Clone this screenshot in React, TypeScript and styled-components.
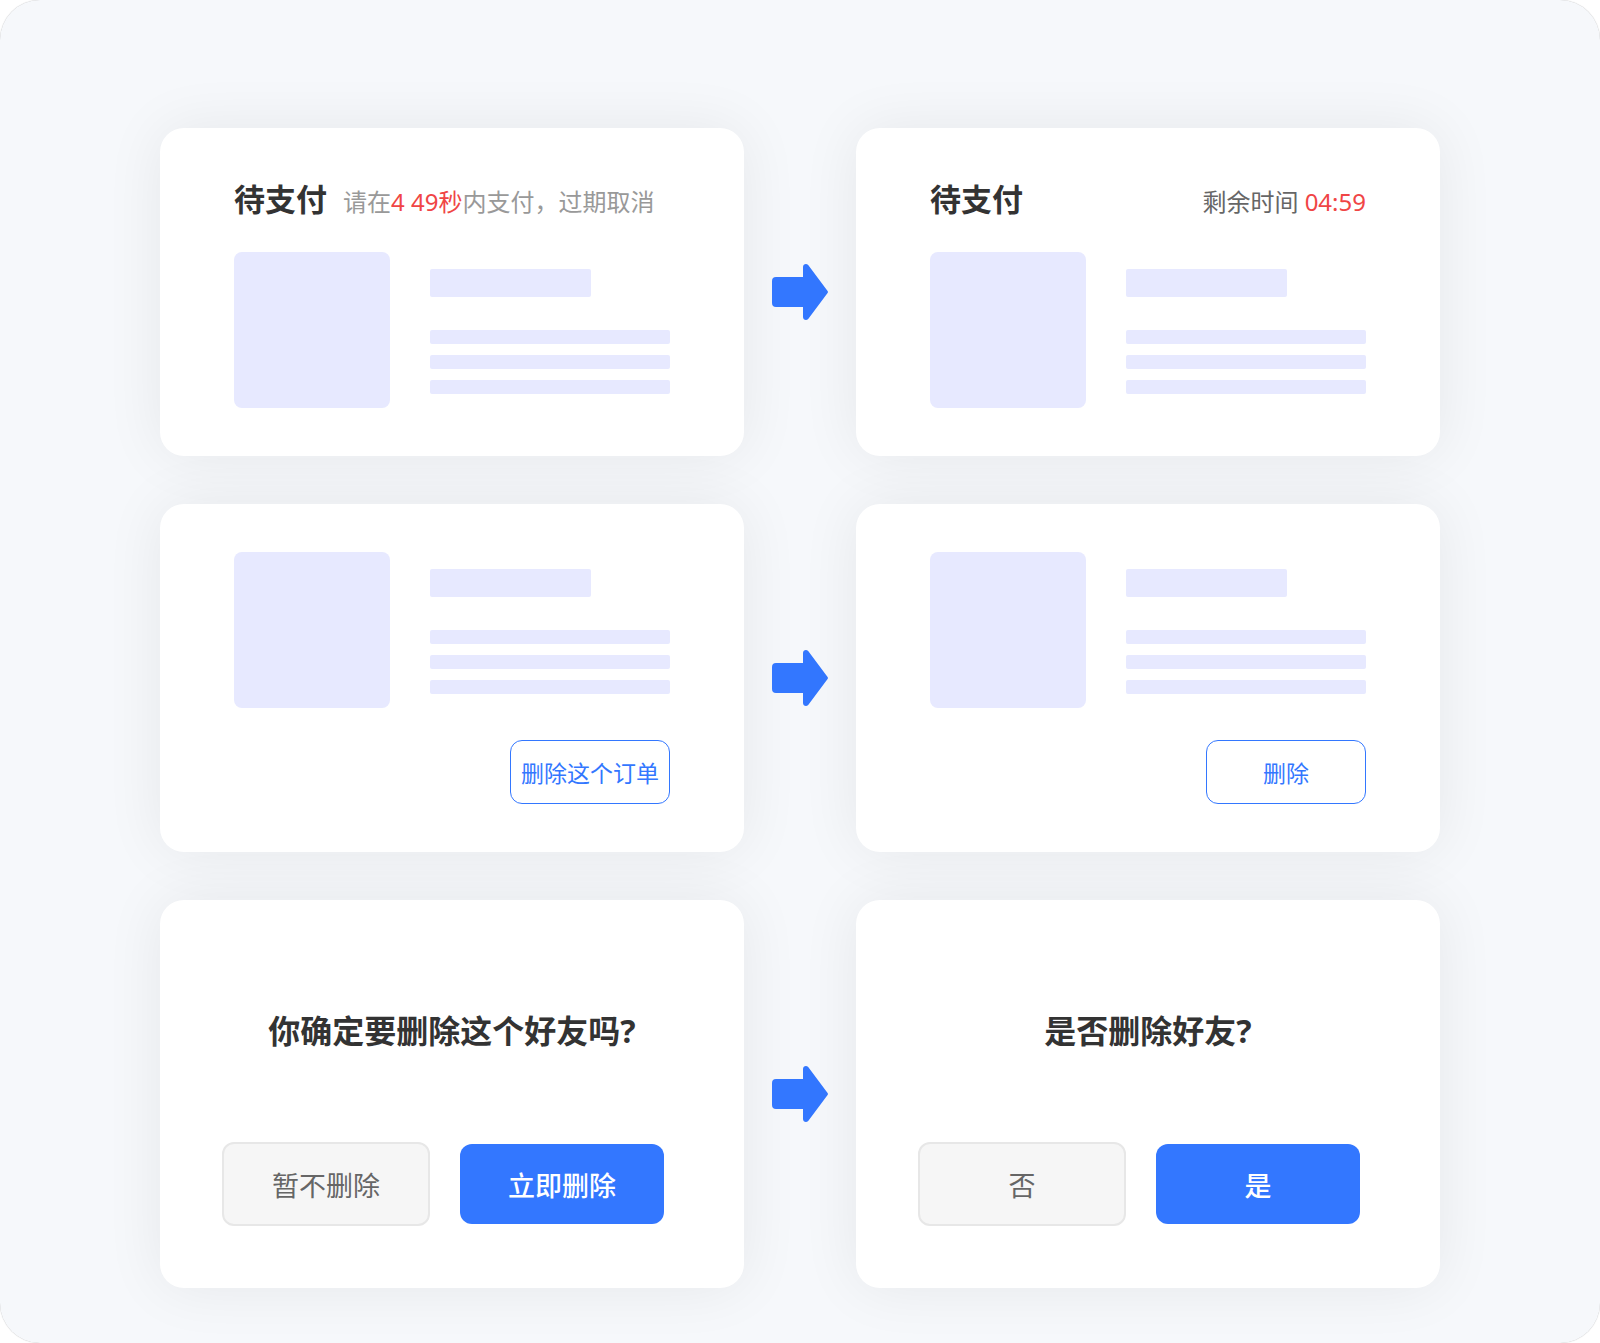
import React from "react";
import styled, { createGlobalStyle } from "styled-components";

const GlobalStyle = createGlobalStyle`
  *, *::before, *::after { box-sizing: border-box; }
  body {
    margin: 0;
    background: #fff;
    font-family: "Noto Sans", "Noto Sans CJK SC", sans-serif;
    color: #333;
  }
`;

const Page = styled.main`
  min-height: 100vh;
  padding: 128px 10% 54px;
  border-radius: 40px;
  background: #f6f8fb;
  box-shadow: 0 0 1px rgba(0, 0, 0, 0.3);
  display: flex;
  flex-direction: column;
  gap: 48px;
`;

const Comparison = styled.section`
  display: grid;
  grid-template-columns: minmax(0, 1fr) 112px minmax(0, 1fr);
  align-items: stretch;
`;

const Card = styled.article`
  border-radius: 24px;
  background: #fff;
  box-shadow: 0 0 60px rgba(30, 30, 10, 0.07);
  display: flex;
  flex-direction: column;
`;

const OrderCard = styled(Card)`
  padding: 48px 74px;
`;

const DialogCard = styled(Card)`
  padding: 108px 62px 62px;
  gap: 88px;
`;

const CardHeader = styled.header<{ $spread?: boolean }>`
  display: flex;
  align-items: baseline;
  justify-content: ${(p) => (p.$spread ? "space-between" : "flex-start")};
  gap: 16px;
  height: 46px;
  margin-bottom: 30px;
  white-space: nowrap;
`;

const Title = styled.h2`
  margin: 0;
  font-size: 31px;
  line-height: 46px;
  font-weight: 700;
`;

const Question = styled(Title)`
  font-size: 32px;
  text-align: center;
`;

const Hint = styled.p<{ $dark?: boolean }>`
  margin: 0;
  font-size: 24px;
  line-height: 46px;
  color: ${(p) => (p.$dark ? "#666" : "#999")};
`;

const Urgent = styled.span`
  color: #f04545;
`;

const Product = styled.div`
  display: flex;
  gap: 40px;
`;

const Thumbnail = styled.div`
  flex: none;
  width: 156px;
  height: 156px;
  border-radius: 8px;
  background: #e7e9ff;
`;

const Details = styled.div`
  flex: 1;
  padding-top: 17px;
  display: flex;
  flex-direction: column;
  gap: 11px;
`;

const NameBar = styled.div`
  width: 67%;
  height: 28px;
  margin-bottom: 22px;
  border-radius: 2px;
  background: #e7e9ff;
`;

const Line = styled.div`
  height: 14px;
  border-radius: 2px;
  background: #e7e9ff;
`;

const Button = styled.button`
  display: flex;
  align-items: center;
  justify-content: center;
  padding: 0;
  border-radius: 12px;
  font-family: inherit;
  white-space: nowrap;
  cursor: pointer;
`;

const OutlineButton = styled(Button)`
  align-self: flex-end;
  width: 160px;
  height: 64px;
  margin-top: 32px;
  border: 1px solid #3377ff;
  background: #fff;
  color: #3377ff;
  font-size: 23px;
`;

const Actions = styled.div`
  display: flex;
  align-items: center;
  gap: 30px;
`;

const CancelButton = styled(Button)`
  width: 208px;
  height: 84px;
  border: 2px solid #e7e7e7;
  background: #f6f6f6;
  color: #666;
  font-size: 27px;
`;

const PrimaryButton = styled(Button)`
  width: 204px;
  height: 80px;
  border: 0;
  background: #3377ff;
  color: #fff;
  font-size: 27px;
  font-weight: 500;
`;

const ArrowIcon = styled.svg`
  place-self: center;
  width: 56px;
  height: 56px;
  fill: #3377ff;
`;

function Arrow() {
  return (
    <ArrowIcon viewBox="0 0 56 56" aria-hidden="true">
      <path d="M4 13H31V3C31 0.2 34.3 -1 36.2 1.1L55.2 26.4C56.2 27.6 56.2 28.4 55.2 29.6L36.2 54.9C34.3 57 31 55.8 31 53V43H4Q0 43 0 39V17Q0 13 4 13Z" />
    </ArrowIcon>
  );
}

function ProductPlaceholder() {
  return (
    <Product>
      <Thumbnail />
      <Details>
        <NameBar />
        <Line />
        <Line />
        <Line />
      </Details>
    </Product>
  );
}

function OrderWithAction({ action }: { action: string }) {
  return (
    <OrderCard>
      <ProductPlaceholder />
      <OutlineButton type="button">{action}</OutlineButton>
    </OrderCard>
  );
}

interface ConfirmProps {
  question: string;
  cancel: string;
  confirm: string;
}

function Confirm({ question, cancel, confirm }: ConfirmProps) {
  return (
    <DialogCard>
      <Question>{question}</Question>
      <Actions>
        <CancelButton type="button">{cancel}</CancelButton>
        <PrimaryButton type="button">{confirm}</PrimaryButton>
      </Actions>
    </DialogCard>
  );
}

export default function App() {
  return (
    <>
      <GlobalStyle />
      <Page lang="zh-CN">
        <Comparison>
          <OrderCard>
            <CardHeader>
              <Title>待支付</Title>
              <Hint>
                请在<Urgent>4 49秒</Urgent>内支付，过期取消
              </Hint>
            </CardHeader>
            <ProductPlaceholder />
          </OrderCard>
          <Arrow />
          <OrderCard>
            <CardHeader $spread>
              <Title>待支付</Title>
              <Hint $dark>
                剩余时间 <Urgent>04:59</Urgent>
              </Hint>
            </CardHeader>
            <ProductPlaceholder />
          </OrderCard>
        </Comparison>
        <Comparison>
          <OrderWithAction action="删除这个订单" />
          <Arrow />
          <OrderWithAction action="删除" />
        </Comparison>
        <Comparison>
          <Confirm question="你确定要删除这个好友吗?" cancel="暂不删除" confirm="立即删除" />
          <Arrow />
          <Confirm question="是否删除好友?" cancel="否" confirm="是" />
        </Comparison>
      </Page>
    </>
  );
}
